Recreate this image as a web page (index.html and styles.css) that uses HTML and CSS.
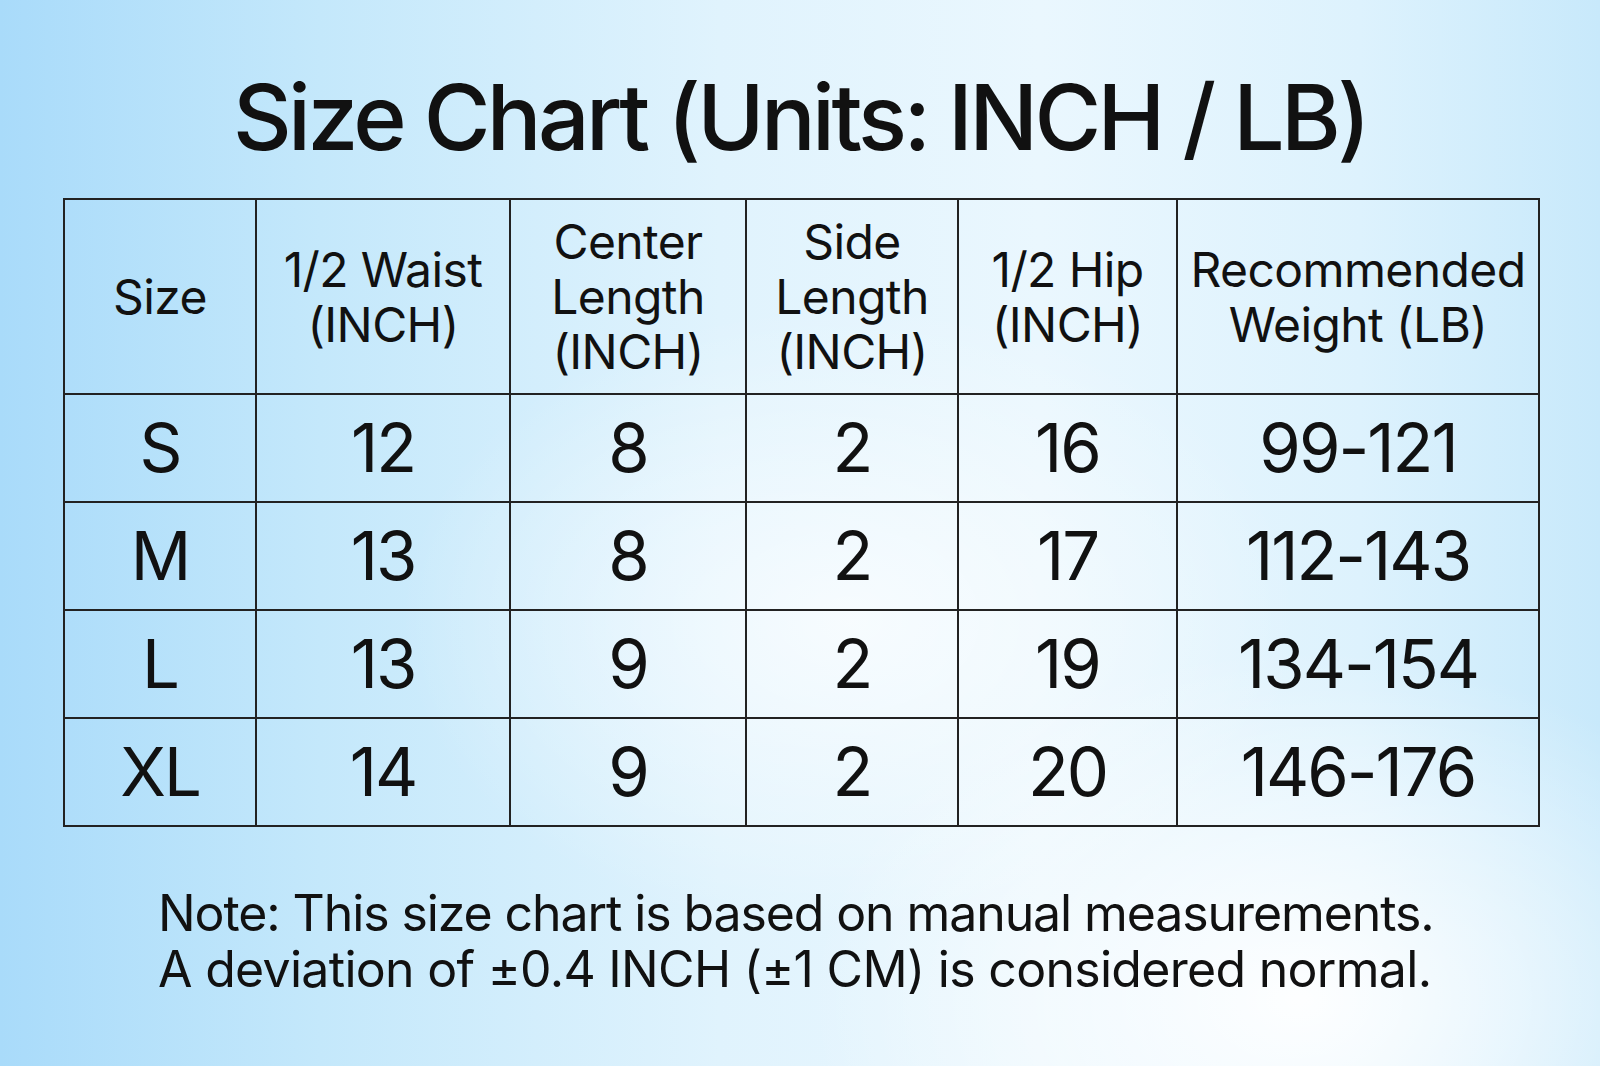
FILE: index.html
```html
<!DOCTYPE html>
<html lang="en">
<head>
<meta charset="utf-8">
<title>Size Chart</title>
<link rel="stylesheet" href="styles.css">
</head>
<body>
<main class="page">
  <h1 class="title">Size Chart (Units: INCH / LB)</h1>
  <table class="chart">
    <colgroup>
      <col class="c1"><col class="c2"><col class="c3"><col class="c4"><col class="c5"><col class="c6">
    </colgroup>
    <thead>
      <tr>
        <th>Size</th>
        <th>1/2 Waist<br>(INCH)</th>
        <th>Center<br>Length<br>(INCH)</th>
        <th>Side<br>Length<br>(INCH)</th>
        <th>1/2 Hip<br>(INCH)</th>
        <th>Recommended<br>Weight (LB)</th>
      </tr>
    </thead>
    <tbody>
      <tr><td>S</td><td>12</td><td>8</td><td>2</td><td>16</td><td>99-121</td></tr>
      <tr><td>M</td><td>13</td><td>8</td><td>2</td><td>17</td><td>112-143</td></tr>
      <tr><td>L</td><td>13</td><td>9</td><td>2</td><td>19</td><td>134-154</td></tr>
      <tr><td>XL</td><td>14</td><td>9</td><td>2</td><td>20</td><td>146-176</td></tr>
    </tbody>
  </table>
  <p class="note"><span class="note-line">Note: This size chart is based on manual measurements.</span><span class="note-line wide">A deviation of ±0.4 INCH (±1 CM) is considered normal.</span></p>
</main>
</body>
</html>
```

FILE: styles.css
```css
html, body {
  margin: 0;
  padding: 0;
}
body {
  width: 1600px;
  height: 1066px;
  overflow: hidden;
  font-family: Inter, "Liberation Sans", Arial, sans-serif;
  color: #111;
  background:
    radial-gradient(ellipse 700px 500px at 1300px 1000px, rgba(255,255,255,0.95), rgba(255,255,255,0) 70%),
    radial-gradient(ellipse 600px 420px at 850px 620px, rgba(255,255,255,0.7), rgba(255,255,255,0) 75%),
    linear-gradient(90deg, #a9dbfa 0%, #c4e8fb 20%, #e0f3fd 45%, #eaf7fe 65%, #ddf2fd 85%, #c8e9fb 100%);
}
.page {
  display: flex;
  flex-direction: column;
  height: 1066px;
}
.title {
  flex: none;
  margin: 0;
  padding-top: 62px;
  height: 198px;
  box-sizing: border-box;
  text-align: center;
  font-size: 91px;
  font-weight: 500;
  line-height: 110px;
  letter-spacing: -3.6px;
}
.chart {
  flex: none;
  margin-left: 63px;
  width: 1475px;
  border-collapse: collapse;
  table-layout: fixed;
}
.c1 { width: 192px; }
.c2 { width: 254px; }
.c3 { width: 236px; }
.c4 { width: 212px; }
.c5 { width: 219px; }
.c6 { width: 362px; }
.chart th, .chart td {
  border: 2px solid #222;
  text-align: center;
  vertical-align: middle;
  padding: 0;
}
.chart th {
  height: 193px;
  font-size: 48px;
  font-weight: 400;
  line-height: 55px;
  letter-spacing: -0.6px;
}
.chart td {
  height: 104px;
  padding-bottom: 2px;
  font-size: 67px;
  font-weight: 400;
  letter-spacing: -2px;
}
.note {
  flex: none;
  display: flex;
  flex-direction: column;
  margin: 58px 0 0 158px;
  font-size: 50px;
  line-height: 56px;
  font-weight: 400;
  letter-spacing: -1.1px;
}
.note-line.wide {
  letter-spacing: -0.7px;
}
```
